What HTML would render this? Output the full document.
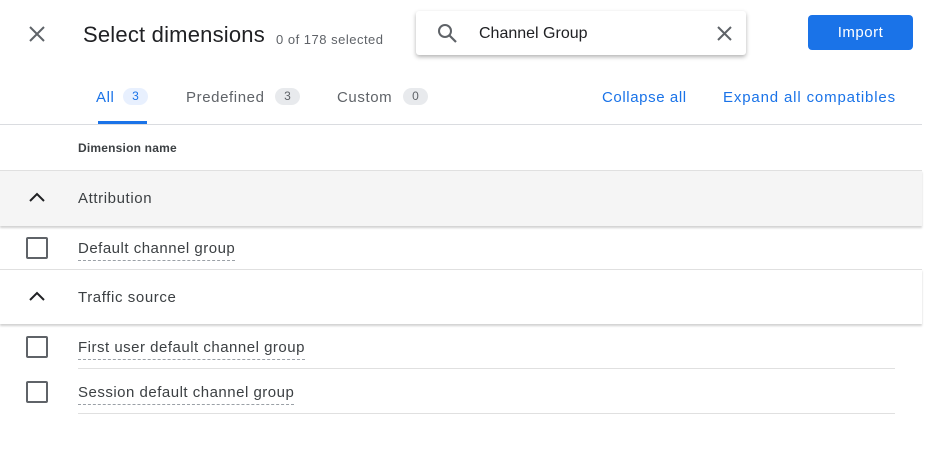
<!DOCTYPE html>
<html><head><style>
body{margin:0;width:934px;height:462px;background:#fff;font-family:"Liberation Sans",Arial,sans-serif;position:relative;overflow:hidden;color:#3c4043}
.a{position:absolute;white-space:nowrap}
.l{letter-spacing:0.6px}
.badge{position:absolute;height:17px;border-radius:9px;background:#e8eaed;font-size:12px;color:#5f6368;text-align:center;line-height:17px}
.cb{position:absolute;left:26px;width:18px;height:18px;border:2px solid #5f6368;border-radius:2px}
.dn{position:absolute;left:78px;font-size:15px;color:#3c4043;border-bottom:1.5px dashed #9aa0a6;padding-bottom:2px;line-height:18px;letter-spacing:0.5px}
</style></head><body>
<svg class="a" style="left:29px;top:26px" width="16" height="16" viewBox="0 0 16 16"><path d="M1 1L15 15M15 1L1 15" stroke="#5f6368" stroke-width="2"/></svg>
<div class="a" style="left:83px;top:22px;font-size:22px;color:#202124;letter-spacing:0.2px">Select dimensions</div>
<div class="a" style="left:276px;top:32px;font-size:13px;color:#5f6368;letter-spacing:0.5px">0 of 178 selected</div>
<div class="a" style="left:416px;top:11px;width:330px;height:44px;background:#fff;border-radius:3px;box-shadow:0 2px 4px rgba(0,0,0,.3)"></div>
<svg class="a" style="left:437px;top:23px" width="21" height="21" viewBox="0 0 21 21"><circle cx="8" cy="8" r="6" fill="none" stroke="#5f6368" stroke-width="2"/><path d="M12.5 12.5L19 19" stroke="#5f6368" stroke-width="2.2"/></svg>
<div class="a" style="left:479px;top:25px;font-size:16px;color:#202124">Channel Group</div>
<svg class="a" style="left:717px;top:26px" width="15" height="15" viewBox="0 0 15 15"><path d="M1 1L14 14M14 1L1 14" stroke="#5f6368" stroke-width="2"/></svg>
<div class="a" style="left:808px;top:15px;width:105px;height:35px;background:#1a73e8;border-radius:4px;color:#fff;font-size:15px;text-align:center;line-height:36px;letter-spacing:0.5px">Import</div>
<div class="a l" style="left:96px;top:89px;font-size:15px;color:#1a73e8">All</div>
<div class="badge" style="left:123px;top:88px;width:25px;background:#e8f0fe;color:#1a73e8">3</div>
<div class="a" style="left:98px;top:121px;width:49px;height:3px;background:#1a73e8"></div>
<div class="a l" style="left:186px;top:89px;font-size:15px;color:#5f6368">Predefined</div>
<div class="badge" style="left:275px;top:88px;width:25px">3</div>
<div class="a l" style="left:337px;top:89px;font-size:15px;color:#5f6368">Custom</div>
<div class="badge" style="left:403px;top:88px;width:25px">0</div>
<div class="a l" style="left:602px;top:89px;font-size:15px;color:#1a73e8">Collapse all</div>
<div class="a" style="left:723px;top:89px;font-size:15px;color:#1a73e8;letter-spacing:0.85px">Expand all compatibles</div>
<div class="a" style="left:0;top:124px;width:922px;height:1px;background:#dadce0"></div>
<div class="a" style="left:78px;top:141px;font-size:12px;font-weight:bold;color:#3c4043;letter-spacing:0.2px">Dimension name</div>
<div class="a" style="left:0;top:170px;width:922px;height:55px;background:#f5f5f5;border-top:1px solid #e0e0e0;box-shadow:0 2px 2px rgba(0,0,0,.18)"></div>
<svg class="a" style="left:28px;top:192px" width="18" height="11" viewBox="0 0 18 11"><path d="M2 9L9 2L16 9" fill="none" stroke="#202124" stroke-width="2"/></svg>
<div class="a l" style="left:78px;top:190px;font-size:15px;color:#3c4043">Attribution</div>
<div class="cb" style="top:237px"></div>
<div class="dn" style="top:240px">Default channel group</div>
<div class="a" style="left:0;top:269px;width:922px;height:54px;background:#fff;border-top:1px solid #e0e0e0;box-shadow:0 2px 2px rgba(0,0,0,.18)"></div>
<svg class="a" style="left:28px;top:291px" width="18" height="11" viewBox="0 0 18 11"><path d="M2 9L9 2L16 9" fill="none" stroke="#202124" stroke-width="2"/></svg>
<div class="a l" style="left:78px;top:289px;font-size:15px;color:#3c4043">Traffic source</div>
<div class="cb" style="top:336px"></div>
<div class="dn" style="top:339px">First user default channel group</div>
<div class="a" style="left:78px;top:368px;width:817px;height:1px;background:#e0e0e0"></div>
<div class="cb" style="top:381px"></div>
<div class="dn" style="top:384px">Session default channel group</div>
<div class="a" style="left:78px;top:413px;width:817px;height:1px;background:#e0e0e0"></div>
</body></html>
